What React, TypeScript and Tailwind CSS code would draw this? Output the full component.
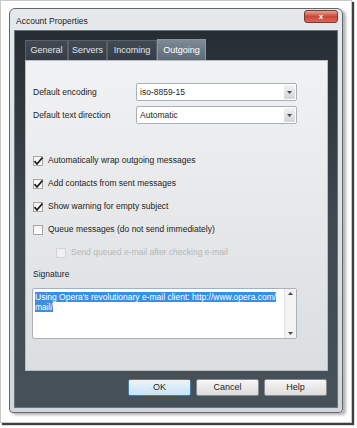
import React from "react";

const TABS = ["General", "Servers", "Incoming", "Outgoing"];
const TAB_W: Record<string, string> = { General: "w-[43px]", Servers: "w-[39px]", Incoming: "w-[50px]", Outgoing: "w-[49px]" };

function Arrow({ up }: { up?: boolean }) {
  return (
    <svg width="5" height="3" viewBox="0 0 5 3" className={up ? "rotate-180" : ""}>
      <path d="M0 0h5L2.5 3z" fill="#4b4b4b" />
    </svg>
  );
}

function Select({ value }: { value: string }) {
  return (
    <div className="flex h-[18px] w-[161px] items-center rounded-[2px] border border-[#a9b0b7] bg-white pl-[3px]">
      <span className="flex-1 text-[#1e1e1e]">{value}</span>
      <div className="mr-px flex h-[14px] w-[11px] items-center justify-center rounded-[1px] bg-gradient-to-b from-[#f2f2f2] to-[#d4d4d4]">
        <Arrow />
      </div>
    </div>
  );
}

function Check({ label, checked, disabled, indent }: { label: string; checked?: boolean; disabled?: boolean; indent?: boolean }) {
  return (
    <div className={`flex h-[23px] items-center gap-[5px] ${indent ? "pl-[30px]" : "pl-[7px]"}`}>
      <div className={`relative h-[10px] w-[10px] border ${disabled ? "border-[#d3d3d3] bg-[#f1f1f1]" : "border-[#a6a6a6] bg-gradient-to-b from-[#f4f4f4] to-white"}`}>
        {checked && (
          <svg width="11" height="10" viewBox="0 0 11 10" className="absolute left-[-1px] top-[-1px]">
            <path d="M1.5 5.2 L4 8 L9.5 1.5" stroke="#1c1c1c" strokeWidth="1.8" fill="none" />
          </svg>
        )}
      </div>
      <span className={disabled ? "text-[#b7b7b7]" : "text-[#1e1e1e]"}>{label}</span>
    </div>
  );
}

export default function App() {
  return (
    <div className="h-[428px] w-[357px] overflow-hidden bg-white text-[8.5px] leading-none" style={{ fontFamily: '"Liberation Sans", Arial, sans-serif' }}>
      {/* photo frame */}
      <div className="h-[423px] w-[352px] border border-[#c9c9c9] bg-white pl-[8px] pt-[7px] shadow-[2px_2px_1px_rgba(0,0,0,0.75)]">
        {/* window */}
        <div className="flex h-[405px] w-[334px] flex-col rounded-t-[6px] rounded-b-[4px] border border-[#62676c] bg-gradient-to-b from-[#e6e9ec] to-[#d3d7db] px-[4px] pb-[4px] shadow-[3px_2px_3px_rgba(0,0,0,0.3)]">
          {/* title bar */}
          <div className="flex h-[21px] items-start justify-between">
            <span className="pl-[2px] pt-[8px] text-[8.5px] text-[#1b1b1b]">Account Properties</span>
            <div className="mt-[1px] flex h-[13px] w-[34px] items-center justify-center rounded-[3px] border border-[#7c3a32] bg-gradient-to-b from-[#e8a091] via-[#c9483a] to-[#d8685a]">
              <span className="text-[8px] font-bold text-white">x</span>
            </div>
          </div>
          {/* dark area */}
          <div className="flex flex-1 flex-col border border-[#6c747b] bg-gradient-to-b from-[#262d33] via-[#3f4952] to-[#46515a] pl-[10px] pr-[9px] pt-[9px] pb-[11px]">
            <div className="flex h-[20px] items-end">
              {TABS.map((t) => (
                <div
                  key={t}
                  className={`${TAB_W[t]} flex items-center justify-center border border-b-0 ${
                    t === "Outgoing"
                      ? "h-[21px] border-[#8a96a0] bg-gradient-to-b from-[#7e8b96] to-[#5d6b76] text-white"
                      : "h-[20px] border-[#58616a] bg-gradient-to-b from-[#414a52] to-[#353e46] text-[#e3e6e8]"
                  } text-[9px]`}
                >
                  {t}
                </div>
              ))}
            </div>
            {/* panel */}
            <div className="flex h-[311px] flex-col border border-[#b9bec3] bg-gradient-to-b from-[#f1f2f3] to-[#dbdee1] pt-[22px]">
              <div className="flex h-[18px] items-center pl-[7px]">
                <span className="w-[103px] text-[#1e1e1e]">Default encoding</span>
                <Select value="iso-8859-15" />
              </div>
              <div className="mt-[5px] flex h-[18px] items-center pl-[7px]">
                <span className="w-[103px] text-[#1e1e1e]">Default text direction</span>
                <Select value="Automatic" />
              </div>
              <div className="mt-[25px]">
                <Check label="Automatically wrap outgoing messages" checked />
                <Check label="Add contacts from sent messages" checked />
                <Check label="Show warning for empty subject" checked />
                <Check label="Queue messages (do not send immediately)" />
                <Check label="Send queued e-mail after checking e-mail" disabled indent />
              </div>
              <div className="mt-[4px] flex h-[12px] items-center pl-[7px] text-[#1e1e1e]">Signature</div>
              <div className="ml-[6px] mt-[8px] flex h-[51px] w-[265px] rounded-[2px] border border-[#a9b0b7] bg-white">
                <div className="flex-1 pl-[2px] pt-[3px] leading-[10px]">
                  <span className="bg-[#3a8fe4] text-white">Using Opera's revolutionary e-mail client: http://www.opera.com/</span>
                  <br />
                  <span className="bg-[#3a8fe4] text-white">mail/</span>
                </div>
                <div className="flex w-[12px] flex-col items-center justify-between border-l border-[#e3e3e3] bg-[#f3f3f3] py-[3px]">
                  <Arrow up />
                  <Arrow />
                </div>
              </div>
            </div>
            {/* buttons */}
            <div className="mt-auto flex justify-end gap-[5px] pr-[1px]">
              <button className="h-[17px] w-[63px] rounded-[2px] border border-[#3c7fb1] bg-gradient-to-b from-[#eaf5fd] to-[#c9e3f7] text-[9px] text-[#1e1e1e]">OK</button>
              <button className="h-[17px] w-[63px] rounded-[2px] border border-[#8a8a8a] bg-gradient-to-b from-[#f6f6f6] to-[#dcdcdc] text-[9px] text-[#1e1e1e]">Cancel</button>
              <button className="h-[17px] w-[63px] rounded-[2px] border border-[#8a8a8a] bg-gradient-to-b from-[#f6f6f6] to-[#dcdcdc] text-[9px] text-[#1e1e1e]">Help</button>
            </div>
          </div>
        </div>
      </div>
    </div>
  );
}
